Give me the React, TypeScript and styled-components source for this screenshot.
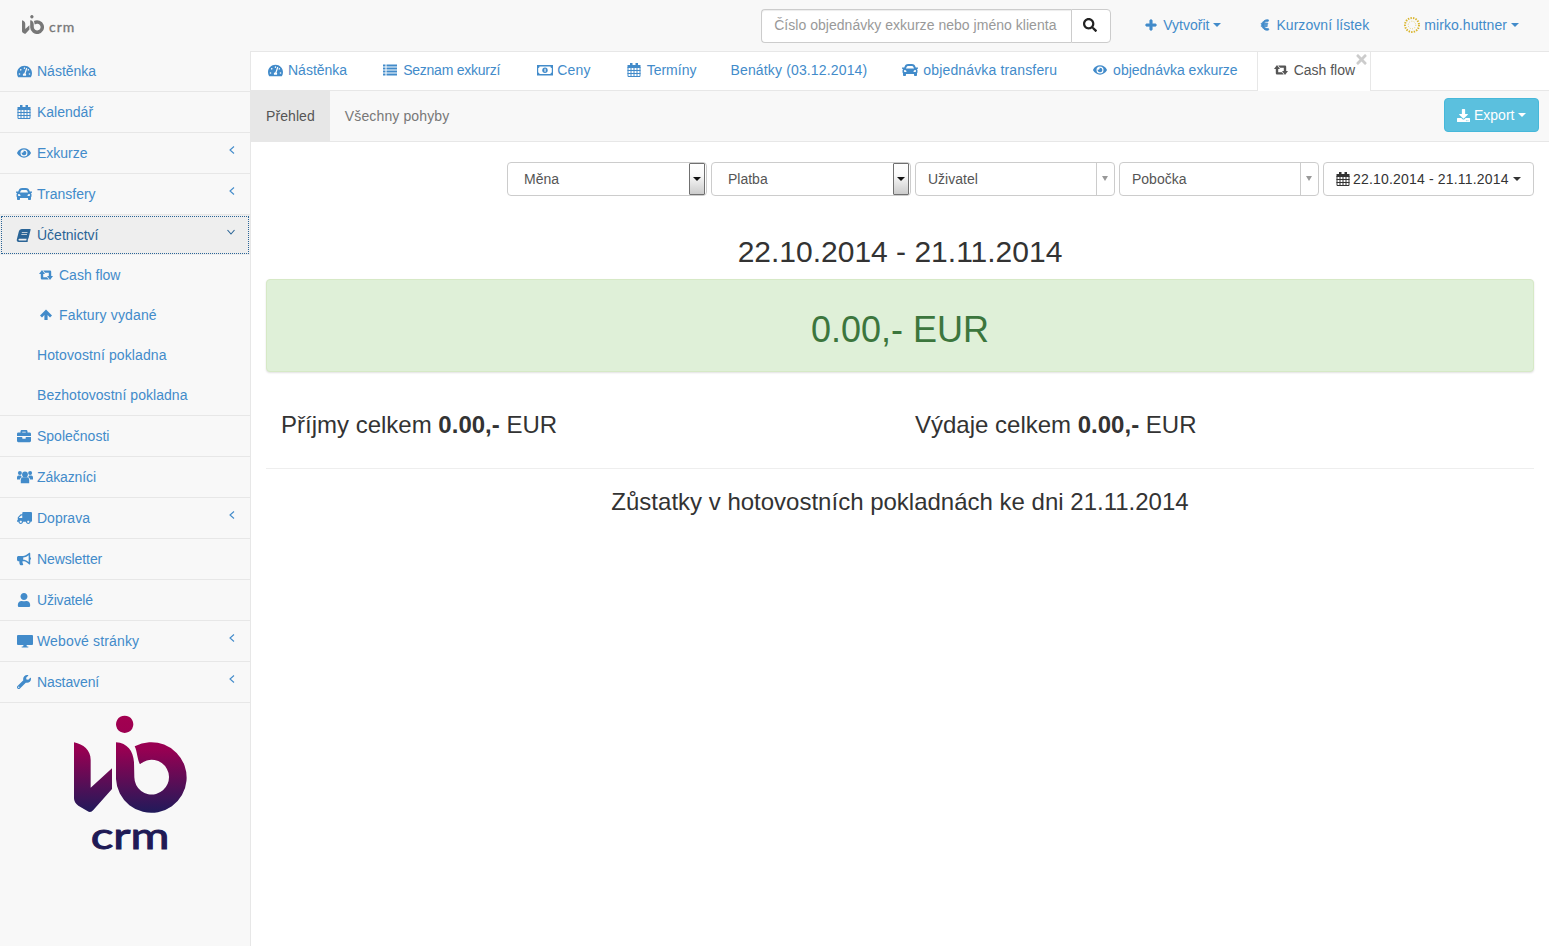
import React from "react";
import styled, { createGlobalStyle } from "styled-components";
import {
  FaTachometerAlt, FaEye, FaCar, FaBook, FaBriefcase, FaTruck,
  FaBullhorn, FaUser, FaWrench, FaPlus, FaEuroSign, FaSearch,
  FaDownload, FaTimes,
} from "react-icons/fa";

const Global = createGlobalStyle`
  html, body { margin: 0; padding: 0; background: #fff; }
  body { font-family: "Liberation Sans", Arial, sans-serif; font-size: 14px; color: #333; }
  * { box-sizing: border-box; }
`;

const Page = styled.div`
  width: 1549px;
  height: 946px;
  overflow: hidden;
  display: flex;
  flex-direction: column;
`;

const Header = styled.header`
  height: 51px;
  flex: none;
  background: #f8f8f8;
  display: flex;
  align-items: center;
  padding: 0 15px 2px 22px;
`;

const Brand = styled.div`
  display: flex;
  align-items: center;
  gap: 5px;
  color: #777;
`;

const BrandText = styled.span`
  font-family: Lato, "Liberation Sans", sans-serif;
  font-size: 14px;
  font-weight: 400;
  letter-spacing: 1px;
  margin-top: 3px;
  -webkit-text-stroke: 0.3px #777;
`;

const SearchGroup = styled.form`
  margin-left: auto;
  margin-right: 19px;
  display: flex;
  height: 34px;
  width: 350px;
  margin-top: 3px;
`;

const SearchInput = styled.div`
  width: 310px;
  border: 1px solid #ccc;
  border-right: 0;
  border-radius: 4px 0 0 4px;
  background: #fff;
  color: #999;
  padding-left: 12px;
  line-height: 30px;
  letter-spacing: 0.03px;
  box-shadow: inset 0 1px 1px rgba(0, 0, 0, 0.075);
  white-space: nowrap;
`;

const SearchButton = styled.div`
  width: 40px;
  border: 1px solid #ccc;
  border-radius: 0 4px 4px 0;
  background: #fff;
  color: #222;
  display: flex;
  align-items: center;
  justify-content: center;
  font-size: 14px;
  padding-right: 2px;
  padding-bottom: 2px;
`;

const TopLink = styled.a<{ $gap?: number; $ls?: number }>`
  display: flex;
  align-items: center;
  color: #428bca;
  padding: 0 15px;
  margin-left: ${(p) => p.$gap ?? 0}px;
  height: 50px;
  white-space: nowrap;
  letter-spacing: ${(p) => p.$ls ?? 0}px;
`;

const TopIcon = styled.span<{ $w: number }>`
  display: inline-flex;
  width: ${(p) => p.$w}px;
  font-size: 12px;
  & svg.bold path {
    stroke: currentColor;
    stroke-width: 35px;
  }
`;

const Caret = styled.span`
  display: inline-block;
  width: 0;
  height: 0;
  margin-left: 4px;
  border-top: 4px solid currentColor;
  border-left: 4px solid transparent;
  border-right: 4px solid transparent;
`;

const Body = styled.div`
  flex: 1;
  display: flex;
  min-height: 0;
`;

const Sidebar = styled.aside`
  width: 251px;
  flex: none;
  background: #f8f8f8;
  border-right: 1px solid #e7e7e7;
`;

const NavRow = styled.a<{ $active?: boolean; $noBorder?: boolean }>`
  display: flex;
  align-items: center;
  height: ${(p) => (p.$noBorder ? 40 : 41)}px;
  padding-left: 17px;
  padding-right: 15px;
  color: ${(p) => (p.$active ? "#2a6496" : "#428bca")};
  background: ${(p) => (p.$active ? "#eee" : "transparent")};
  border-bottom: ${(p) => (p.$noBorder ? "0" : "1px solid #e7e7e7")};
  outline: ${(p) => (p.$active ? "1px dotted #2a6496" : "0")};
  outline-offset: -2px;
`;

const NavLabel = styled.span<{ $ls?: number }>`
  letter-spacing: ${(p) => p.$ls ?? 0}px;
  white-space: nowrap;
`;

const NavIcon = styled.span`
  width: 20px;
  flex: none;
  display: inline-flex;
  font-size: 14px;
`;

const Chevron = styled.svg`
  margin-left: auto;
  width: 6px;
  height: 8px;
  margin-top: -6px;
  fill: none;
  stroke: currentColor;
  stroke-width: 1.1;
`;

const ChevronDown = styled.svg`
  margin-left: auto;
  width: 8px;
  height: 6px;
  margin-top: -6px;
  fill: none;
  stroke: currentColor;
  stroke-width: 1.1;
`;

const SubList = styled.div`
  border-bottom: 1px solid #e7e7e7;
`;

const SubRow = styled.a<{ $plain?: boolean }>`
  display: flex;
  align-items: center;
  height: 40px;
  padding-left: ${(p) => (p.$plain ? 37 : 39)}px;
  color: #428bca;
`;

const LogoSlot = styled.div`
  padding: 2px 0 0 50px;
`;

const BigLogo = styled.svg`
  display: block;
  width: 160px;
  height: 160px;
`;

const Main = styled.main`
  flex: 1;
  min-width: 0;
  border-top: 1px solid #e7e7e7;
  display: flex;
  flex-direction: column;
`;

const Tabs = styled.nav`
  height: 39px;
  flex: none;
  display: flex;
  align-items: flex-start;
  gap: 3px;
  border-bottom: 1px solid #e7e7e7;
  background: #fff;
`;

const Tab = styled.a<{ $active?: boolean; $ls?: number; $ml?: number }>`
  position: relative;
  display: flex;
  align-items: center;
  height: ${(p) => (p.$active ? 39 : 38)}px;
  margin-left: ${(p) => p.$ml ?? 0}px;
  padding: 0 15px ${(p) => (p.$active ? 3 : 2)}px 16px;
  color: ${(p) => (p.$active ? "#555" : "#428bca")};
  background: #fff;
  border-left: 1px solid ${(p) => (p.$active ? "#e7e7e7" : "transparent")};
  border-right: 1px solid ${(p) => (p.$active ? "#e7e7e7" : "transparent")};
  white-space: nowrap;
  letter-spacing: ${(p) => p.$ls ?? 0}px;
`;

const TabIcon = styled.span`
  display: inline-flex;
  width: 20px;
  font-size: 14px;
`;

const TabClose = styled.span`
  position: absolute;
  top: 0;
  right: 1px;
  color: #ccc;
  font-size: 15px;
  display: inline-flex;
`;

const SubNav = styled.div`
  height: 51px;
  flex: none;
  display: flex;
  align-items: flex-start;
  background: #f8f8f8;
  border-bottom: 1px solid #e7e7e7;
  padding-right: 10px;
`;

const SubNavItem = styled.a<{ $active?: boolean; $ls?: number }>`
  height: 50px;
  line-height: 50px;
  padding: 0 15px;
  color: ${(p) => (p.$active ? "#555" : "#777")};
  background: ${(p) => (p.$active ? "#e7e7e7" : "transparent")};
  letter-spacing: ${(p) => p.$ls ?? 0}px;
`;

const ExportButton = styled.button`
  margin-left: auto;
  margin-top: 7px;
  width: 95px;
  height: 34px;
  display: flex;
  align-items: center;
  padding: 0 0 0 12px;
  border: 1px solid #46b8da;
  border-radius: 4px;
  background: #5bc0de;
  color: #fff;
  font: inherit;
`;

const ExportIcon = styled.span`
  display: inline-flex;
  width: 17px;
  font-size: 13px;
`;

const Content = styled.section`
  padding: 20px 15px 0;
`;

const Filters = styled.div`
  display: flex;
  justify-content: flex-end;
  gap: 4px;
`;

const SelectBox = styled.div<{ $native?: boolean }>`
  position: relative;
  width: 200px;
  height: 34px;
  border: 1px solid #ccc;
  border-radius: 4px;
  background: #fff;
  color: #555;
  line-height: 32px;
  padding-left: ${(p) => (p.$native ? 16 : 12)}px;
`;

const NativeArrow = styled.span`
  position: absolute;
  top: 0;
  right: 1px;
  width: 16px;
  height: 32px;
  border: 1px solid #707070;
  border-radius: 1px;
  background: linear-gradient(#fff, #fafafa 35%, #ccc);
  &::after {
    content: "";
    position: absolute;
    left: 3px;
    top: 13px;
    border-top: 4px solid #111;
    border-left: 4px solid transparent;
    border-right: 4px solid transparent;
  }
`;

const SoftArrow = styled.span`
  position: absolute;
  top: 0;
  right: 0;
  width: 18px;
  height: 32px;
  border-left: 1px solid #ccc;
  &::after {
    content: "";
    position: absolute;
    left: 5px;
    top: 13px;
    border-top: 5px solid #999;
    border-left: 3.5px solid transparent;
    border-right: 3.5px solid transparent;
  }
`;

const DateButton = styled.div`
  width: 211px;
  height: 34px;
  border: 1px solid #ccc;
  border-radius: 4px;
  background: #fff;
  color: #333;
  display: flex;
  align-items: center;
  padding-left: 12px;
  white-space: nowrap;
`;

const DateIcon = styled.span`
  display: inline-flex;
  width: 17px;
`;

const DateText = styled.span`
  letter-spacing: 0.18px;
`;

const RangeTitle = styled.h2`
  margin: 39px 0 11px;
  font-size: 30px;
  font-weight: 400;
  line-height: 33px;
  text-align: center;
  color: #333;
`;

const Balance = styled.div`
  height: 93px;
  display: flex;
  align-items: center;
  justify-content: center;
  padding-top: 8px;
  background: #dff0d8;
  border: 1px solid #d6e9c6;
  border-radius: 4px;
  color: #3c763d;
  font-size: 36px;
  box-shadow: 0 1px 2px rgba(0, 0, 0, 0.12);
`;

const Totals = styled.div`
  display: grid;
  grid-template-columns: 1fr 1fr;
  margin-top: 40px;
  padding-bottom: 30px;
  border-bottom: 1px solid #eee;
`;

const TotalItem = styled.div`
  padding-left: 15px;
  font-size: 24px;
  line-height: 26px;
  color: #333;
`;

const Remaining = styled.h3`
  margin: 20px 0 0;
  font-size: 24px;
  font-weight: 400;
  line-height: 26px;
  text-align: center;
  color: #333;
`;

const WideCar = styled(FaCar)`
  width: 16px;
  height: 16px;
  margin: -1px 0 -1px -1px;
`;

const SlantBook = styled(FaBook)`
  width: 13px;
  height: 13px;
  transform: skewX(-14deg);
`;

const LeftTruck = styled(FaTruck)`
  width: 15px;
  height: 14px;
  transform: scaleX(-1);
`;

const BigGauge = styled(FaTachometerAlt)`
  width: 15px;
  height: 15px;
`;

const CalendarIcon = () => (
  <svg width="14" height="14" viewBox="0 0 13 14" aria-hidden="true">
    <path fill="currentColor" d="M0 2h13v3H0zM2.5 0h2.5v3H2.5zM8 0h2.5v3H8z" />
    <path
      fill="none"
      stroke="currentColor"
      strokeWidth="1"
      d="M.5 4v9.5h12V4M3.5 5v8M6.5 5v8M9.5 5v8M0 7.5h13M0 10.5h13"
    />
  </svg>
);

const RetweetIcon = () => (
  <svg width="14" height="14" viewBox="0 0 14 14" aria-hidden="true" fill="currentColor">
    <path d="M3 2L6 6H4.2V9.3H8L9.8 11.5H3Q1.8 11.5 1.8 10.3V6H0Z" />
    <path d="M11 12L8 8H9.8V4.7H6L4.2 2.5H11Q12.2 2.5 12.2 3.7V8H14Z" />
  </svg>
);

const BoldArrowUp = () => (
  <svg width="14" height="14" viewBox="0 0 14 14" aria-hidden="true" fill="currentColor">
    <path d="M7 1.5L13 7.5L11 9.5L8.6 7.1V12H5.4V7.1L3 9.5L1 7.5Z" />
  </svg>
);

const ListIcon = () => (
  <svg width="14" height="14" viewBox="0 0 14 14" aria-hidden="true" fill="currentColor">
    <path d="M0 1.5h2.5v2H0zM3.5 1.5H14v2H3.5zM0 4.5h2.5v2H0zM3.5 4.5H14v2H3.5zM0 7.5h2.5v2H0zM3.5 7.5H14v2H3.5zM0 10.5h2.5v2H0zM3.5 10.5H14v2H3.5z" />
  </svg>
);

const MoneyIcon = () => (
  <svg width="16" height="14" viewBox="0 0 16 14" aria-hidden="true">
    <path
      fill="currentColor"
      fillRule="evenodd"
      d="M0 2h16v10.5H0zM2.5 3.5Q2.5 5 1.2 5V9.5Q2.5 9.5 2.5 11H13.5Q13.5 9.5 14.8 9.5V5Q13.5 5 13.5 3.5Z"
    />
    <circle cx="8" cy="7.2" r="2.7" fill="currentColor" />
    <path fill="#fff" d="M7.5 5.8h1.1v3H7.5z" />
  </svg>
);

const UsersIcon = () => (
  <svg width="16" height="14" viewBox="0 0 16 14" aria-hidden="true" fill="currentColor">
    <circle cx="8" cy="4.4" r="2.9" />
    <path d="M3.8 13.2V10.3Q3.8 7.4 6 7.2H10Q12.2 7.4 12.2 10.3V13.2Z" />
    <circle cx="2.9" cy="3" r="2" />
    <circle cx="13.1" cy="3" r="2" />
    <path d="M0 9.4V7.4Q0 5.4 1.6 5.4H4Q4.1 6.6 5 7.1Q3 7.8 2.9 9.4ZM16 9.4V7.4Q16 5.4 14.4 5.4H12Q11.9 6.6 11 7.1Q13 7.8 13.1 9.4Z" />
  </svg>
);

const MonitorIcon = () => (
  <svg width="16" height="14" viewBox="0 0 16 14" aria-hidden="true" fill="currentColor">
    <path d="M1 1h14q1 0 1 1v8q0 1-1 1H1q-1 0-1-1V2q0-1 1-1Z" />
    <path d="M6.5 11h3l.4 1.6h1.4v.9H4.7v-.9h1.4Z" />
  </svg>
);

const UserBadge = () => (
  <svg width="18" height="18" viewBox="0 0 18 18" aria-hidden="true">
    <circle cx="9" cy="9" r="7" fill="none" stroke="#d9b52c" strokeWidth="2" strokeDasharray="1.4 1.2" />
    <circle cx="9" cy="9" r="3.8" fill="none" stroke="#e6cf6f" strokeWidth="1" strokeDasharray="1 1.4" />
  </svg>
);

const markDot = "M224 32a26 26 0 1 0 .01 0Z";
const markV = "M72 112C100 118 122 135 122 165L122 248L186 190L186 252L130 315Q122 325 112 318L85 302Q72 293 72 280Z";
const markB =
  "M254 124A106 106 0 1 1 198 222L198 112C232 114 250 138 252 172L253 217A52 52 0 1 0 270 178C262 165 262 140 254 124Z";

const SmallMark = () => (
  <svg width="22" height="19" viewBox="72 32 338 290" fill="currentColor" aria-hidden="true">
    <path d={markDot} />
    <path d={markV} />
    <path d={markB} />
  </svg>
);

const LeftAngle = () => (
  <Chevron viewBox="0 0 6 8">
    <path d="M5 .5L1 4l4 3.5" />
  </Chevron>
);

const mainItemsA = [
  { icon: <BigGauge />, label: "Nástěnka" },
  { icon: <CalendarIcon />, label: "Kalendář" },
  { icon: <FaEye />, label: "Exkurze", more: true },
  { icon: <WideCar />, label: "Transfery", more: true },
];

const mainItemsB = [
  { icon: <FaBriefcase />, label: "Společnosti" },
  { icon: <UsersIcon />, label: "Zákazníci", ls: -0.1 },
  { icon: <LeftTruck />, label: "Doprava", more: true },
  { icon: <FaBullhorn />, label: "Newsletter", ls: -0.1 },
  { icon: <FaUser />, label: "Uživatelé", ls: -0.2 },
  { icon: <MonitorIcon />, label: "Webové stránky", more: true, ls: 0.15 },
  { icon: <FaWrench />, label: "Nastavení", more: true, ls: -0.1 },
];

const tabs = [
  { icon: <BigGauge />, label: "Nástěnka" },
  { icon: <ListIcon />, label: "Seznam exkurzí", ls: -0.24 },
  { icon: <MoneyIcon />, label: "Ceny", ls: 0.2, ml: 1 },
  { icon: <CalendarIcon />, label: "Termíny" },
  { label: "Benátky (03.12.2014)", ls: 0.15, ml: -2 },
  { icon: <WideCar />, label: "objednávka transferu", ls: 0.15 },
  { icon: <FaEye />, label: "objednávka exkurze" },
];

export default function App() {
  return (
    <Page>
      <Global />
      <Header>
        <Brand>
          <SmallMark />
          <BrandText>crm</BrandText>
        </Brand>
        <SearchGroup>
          <SearchInput>Číslo objednávky exkurze nebo jméno klienta</SearchInput>
          <SearchButton>
            <FaSearch />
          </SearchButton>
        </SearchGroup>
        <TopLink>
          <TopIcon $w={18}>
            <FaPlus className="bold" />
          </TopIcon>
          Vytvořit
          <Caret />
        </TopLink>
        <TopLink $gap={8} $ls={0.07}>
          <TopIcon $w={17}>
            <FaEuroSign className="bold" />
          </TopIcon>
          Kurzovní lístek
        </TopLink>
        <TopLink $gap={4} $ls={0.08}>
          <TopIcon $w={21}>
            <UserBadge />
          </TopIcon>
          mirko.huttner
          <Caret />
        </TopLink>
      </Header>
      <Body>
        <Sidebar>
          {mainItemsA.map((it) => (
            <NavRow key={it.label}>
              <NavIcon>{it.icon}</NavIcon>
              <NavLabel>{it.label}</NavLabel>
              {it.more && <LeftAngle />}
            </NavRow>
          ))}
          <NavRow $active $noBorder>
            <NavIcon>
              <SlantBook />
            </NavIcon>
            <NavLabel>Účetnictví</NavLabel>
            <ChevronDown viewBox="0 0 8 6">
              <path d="M.5 1L4 5l3.5-4" />
            </ChevronDown>
          </NavRow>
          <SubList>
            <SubRow>
              <NavIcon>
                <RetweetIcon />
              </NavIcon>
              <NavLabel>Cash flow</NavLabel>
            </SubRow>
            <SubRow>
              <NavIcon>
                <BoldArrowUp />
              </NavIcon>
              <NavLabel $ls={0.15}>Faktury vydané</NavLabel>
            </SubRow>
            <SubRow $plain>
              <NavLabel $ls={0.1}>Hotovostní pokladna</NavLabel>
            </SubRow>
            <SubRow $plain>
              <NavLabel $ls={0.05}>Bezhotovostní pokladna</NavLabel>
            </SubRow>
          </SubList>
          {mainItemsB.map((it) => (
            <NavRow key={it.label}>
              <NavIcon>{it.icon}</NavIcon>
              <NavLabel $ls={it.ls}>{it.label}</NavLabel>
              {it.more && <LeftAngle />}
            </NavRow>
          ))}
          <LogoSlot>
            <BigLogo viewBox="0 0 480 480">
              <defs>
                <linearGradient id="vib" gradientUnits="userSpaceOnUse" x1="0" y1="32" x2="0" y2="322">
                  <stop offset="0" stopColor="#a30050" />
                  <stop offset="0.35" stopColor="#970052" />
                  <stop offset="1" stopColor="#211a5a" />
                </linearGradient>
              </defs>
              <path d={markDot} fill="url(#vib)" />
              <path d={markV} fill="url(#vib)" />
              <path d={markB} fill="url(#vib)" />
              <text
                x="122"
                y="431"
                fontFamily="Lato, sans-serif"
                fontWeight="400"
                fontSize="112"
                fill="#1f1a55"
                stroke="#1f1a55"
                strokeWidth="3"
                textLength="236"
                lengthAdjust="spacingAndGlyphs"
              >
                crm
              </text>
            </BigLogo>
          </LogoSlot>
        </Sidebar>
        <Main>
          <Tabs>
            {tabs.map((t) => (
              <Tab key={t.label} $ls={t.ls} $ml={t.ml}>
                {t.icon && <TabIcon>{t.icon}</TabIcon>}
                {t.label}
              </Tab>
            ))}
            <Tab $active>
              <TabIcon>
                <RetweetIcon />
              </TabIcon>
              Cash flow
              <TabClose>
                <FaTimes />
              </TabClose>
            </Tab>
          </Tabs>
          <SubNav>
            <SubNavItem $active $ls={0.08}>Přehled</SubNavItem>
            <SubNavItem $ls={0.13}>Všechny pohyby</SubNavItem>
            <ExportButton>
              <ExportIcon>
                <FaDownload />
              </ExportIcon>
              Export
              <Caret />
            </ExportButton>
          </SubNav>
          <Content>
            <Filters>
              <SelectBox $native>
                Měna
                <NativeArrow />
              </SelectBox>
              <SelectBox $native>
                Platba
                <NativeArrow />
              </SelectBox>
              <SelectBox>
                Uživatel
                <SoftArrow />
              </SelectBox>
              <SelectBox>
                Pobočka
                <SoftArrow />
              </SelectBox>
              <DateButton>
                <DateIcon>
                  <CalendarIcon />
                </DateIcon>
                <DateText>22.10.2014 - 21.11.2014</DateText>
                <Caret />
              </DateButton>
            </Filters>
            <RangeTitle>22.10.2014 - 21.11.2014</RangeTitle>
            <Balance>0.00,- EUR</Balance>
            <Totals>
              <TotalItem>
                Příjmy celkem <b>0.00,-</b> EUR
              </TotalItem>
              <TotalItem>
                Výdaje celkem <b>0.00,-</b> EUR
              </TotalItem>
            </Totals>
            <Remaining>Zůstatky v hotovostních pokladnách ke dni 21.11.2014</Remaining>
          </Content>
        </Main>
      </Body>
    </Page>
  );
}
